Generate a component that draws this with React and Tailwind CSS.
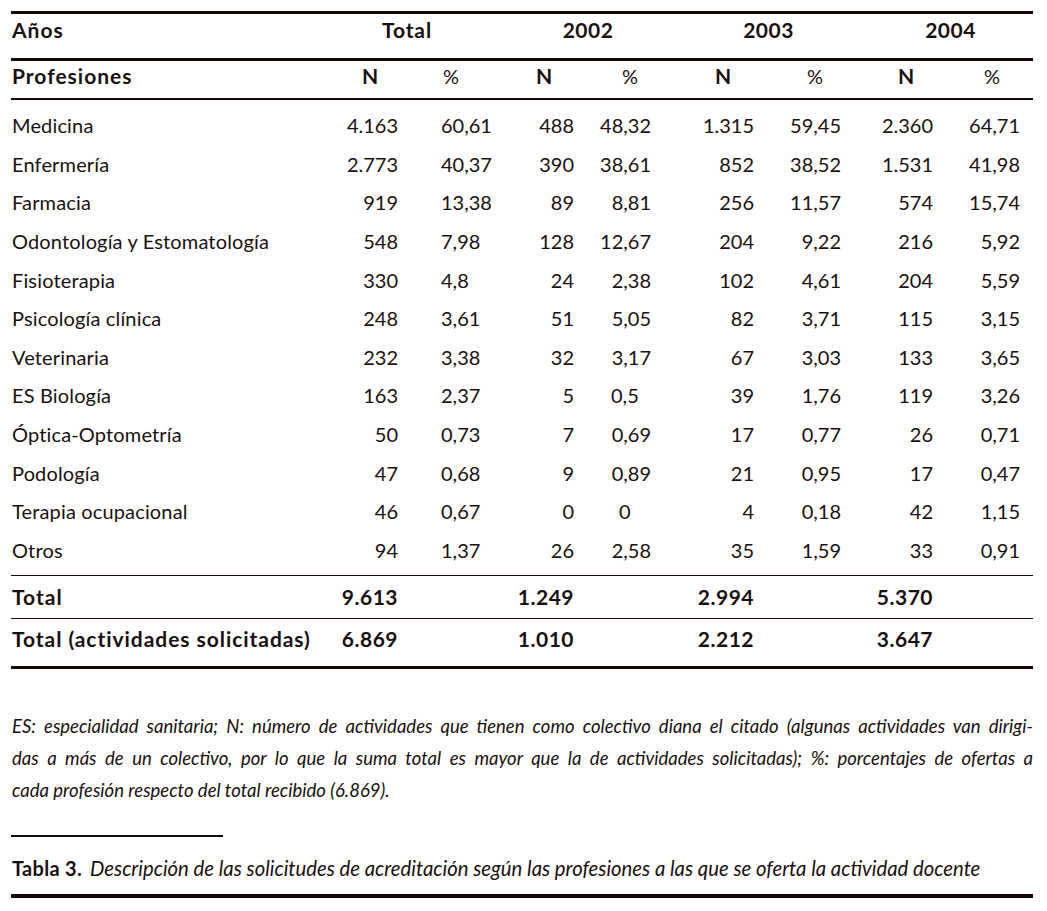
import React from "react";

const rows = [
  ["Medicina", "4.163", "60,61", "488", "48,32", "1.315", "59,45", "2.360", "64,71"],
  ["Enfermería", "2.773", "40,37", "390", "38,61", "852", "38,52", "1.531", "41,98"],
  ["Farmacia", "919", "13,38", "89", "8,81", "256", "11,57", "574", "15,74"],
  ["Odontología y Estomatología", "548", "7,98", "128", "12,67", "204", "9,22", "216", "5,92"],
  ["Fisioterapia", "330", "4,8", "24", "2,38", "102", "4,61", "204", "5,59"],
  ["Psicología clínica", "248", "3,61", "51", "5,05", "82", "3,71", "115", "3,15"],
  ["Veterinaria", "232", "3,38", "32", "3,17", "67", "3,03", "133", "3,65"],
  ["ES Biología", "163", "2,37", "5", "0,5", "39", "1,76", "119", "3,26"],
  ["Óptica-Optometría", "50", "0,73", "7", "0,69", "17", "0,77", "26", "0,71"],
  ["Podología", "47", "0,68", "9", "0,89", "21", "0,95", "17", "0,47"],
  ["Terapia ocupacional", "46", "0,67", "0", "0", "4", "0,18", "42", "1,15"],
  ["Otros", "94", "1,37", "26", "2,58", "35", "1,59", "33", "0,91"],
];

const GRID =
  "grid grid-cols-[319px_68px_86px_90px_77px_103px_87px_92px_87px_13px]";

function BodyRow({ r }) {
  const p2002 = r[4];
  const special2002 = p2002 === "0,5" || p2002 === "0";
  return (
    <div className={`${GRID} h-[38.6px] items-center text-[20px] leading-[22px]`}>
      <div className="pl-[1px] whitespace-nowrap tracking-[0.15px]">{r[0]}</div>
      <div className="text-right">{r[1]}</div>
      <div className="text-left pl-[43px]">{r[2]}</div>
      <div className="text-right">{r[3]}</div>
      {special2002 ? (
        <div className={`text-left ${p2002 === "0" ? "pl-[45px]" : "pl-[37px]"}`}>{p2002}</div>
      ) : (
        <div className="text-right">{p2002}</div>
      )}
      <div className="text-right">{r[5]}</div>
      <div className="text-right">{r[6]}</div>
      <div className="text-right">{r[7]}</div>
      <div className="text-right">{r[8]}</div>
      <div />
    </div>
  );
}

export default function App() {
  return (
    <div
      className="w-[1047px] h-[911px] bg-white text-[#1a1010] overflow-hidden"
      style={{ fontFamily: "Lato, 'Noto Sans', sans-serif" }}
    >
      <div className="ml-[11px] w-[1022px] pt-[11px]">
        {/* top thick line */}
        <div className="h-[3px] bg-[#1a0808]" />
        {/* header row 1 */}
        <div className={`${GRID} h-[44px] items-start pt-[4px] text-[21px] leading-[24px] font-bold tracking-[0.5px]`}>
          <div className="pl-[1px] tracking-[1px]">Años</div>
          <div className="col-span-2 text-center tracking-[0.9px]">Total</div>
          <div className="col-span-2 text-center pl-[41px]">2002</div>
          <div className="col-span-2 text-center pl-[45px]">2003</div>
          <div className="col-span-2 text-center pl-[40px]">2004</div>
          <div />
        </div>
        <div className="h-[3px] bg-[#1a0808]" />
        {/* header row 2 */}
        <div className={`${GRID} h-[37px] items-start pt-[3px] text-[21px] leading-[24px]`}>
          <div className="pl-[1px] font-bold tracking-[1px]">Profesiones</div>
          <div className="text-center pl-[12px] font-bold">N</div>
          <div className="text-center pl-[20px] text-[20px]">%</div>
          <div className="text-center pl-[30px] font-bold">N</div>
          <div className="text-center pl-[35px] text-[20px]">%</div>
          <div className="text-center pl-[41px] font-bold">N</div>
          <div className="text-center pl-[35px] text-[20px]">%</div>
          <div className="text-center pl-[38px] font-bold">N</div>
          <div className="text-center pl-[31px] text-[20px]">%</div>
          <div />
        </div>
        <div className="h-[2px] bg-[#1a0808]" />
        {/* body */}
        <div className="pt-[6px] pb-[5.8px]">
          {rows.map((r) => (
            <BodyRow key={r[0]} r={r} />
          ))}
        </div>
        <div className="h-[1.5px] bg-[#1a0808]" />
        <div className={`${GRID} h-[41.5px] items-start pt-[8.5px] text-[21px] leading-[24px] font-bold tracking-[0.5px]`}>
          <div className="pl-[1px] tracking-[1px]">Total</div>
          <div className="text-right">9.613</div>
          <div />
          <div className="text-right">1.249</div>
          <div />
          <div className="text-right">2.994</div>
          <div />
          <div className="text-right">5.370</div>
          <div />
          <div />
        </div>
        <div className="h-[1.5px] bg-[#1a0808]" />
        <div className={`${GRID} h-[46.5px] items-start pt-[8px] text-[21px] leading-[24px] font-bold tracking-[0.5px]`}>
          <div className="pl-[1px] whitespace-nowrap tracking-[0.95px]">Total (actividades solicitadas)</div>
          <div className="text-right">6.869</div>
          <div />
          <div className="text-right">1.010</div>
          <div />
          <div className="text-right">2.212</div>
          <div />
          <div className="text-right">3.647</div>
          <div />
          <div />
        </div>
        <div className="h-[3px] bg-[#1a0808]" />

        {/* footnote */}
        <div className="mt-[40.8px] italic text-[18.5px] leading-[32px] pl-[1px]">
          <div className="text-justify [text-align-last:justify]">
            ES: especialidad sanitaria; N: número de actividades que tienen como colectivo diana el citado (algunas actividades van dirigi-
          </div>
          <div className="text-justify [text-align-last:justify]">
            das a más de un colectivo, por lo que la suma total es mayor que la de actividades solicitadas); %: porcentajes de ofertas a
          </div>
          <div>cada profesión respecto del total recibido (6.869).</div>
        </div>

        {/* short rule */}
        <div className="mt-[29.2px] h-[2px] w-[212px] bg-[#1a0808]" />

        {/* caption */}
        <div className="mt-[19.3px] flex items-baseline leading-[24px] pl-[1px] whitespace-nowrap">
          <span className="font-bold text-[20px] tracking-[0.3px]">Tabla 3.</span>
          <span className="italic text-[20.3px] ml-[8px]">
            Descripción de las solicitudes de acreditación según las profesiones a las que se oferta la actividad docente
          </span>
        </div>
        <div className="mt-[13.7px] h-[4px] bg-[#1a0808]" />
      </div>
    </div>
  );
}
